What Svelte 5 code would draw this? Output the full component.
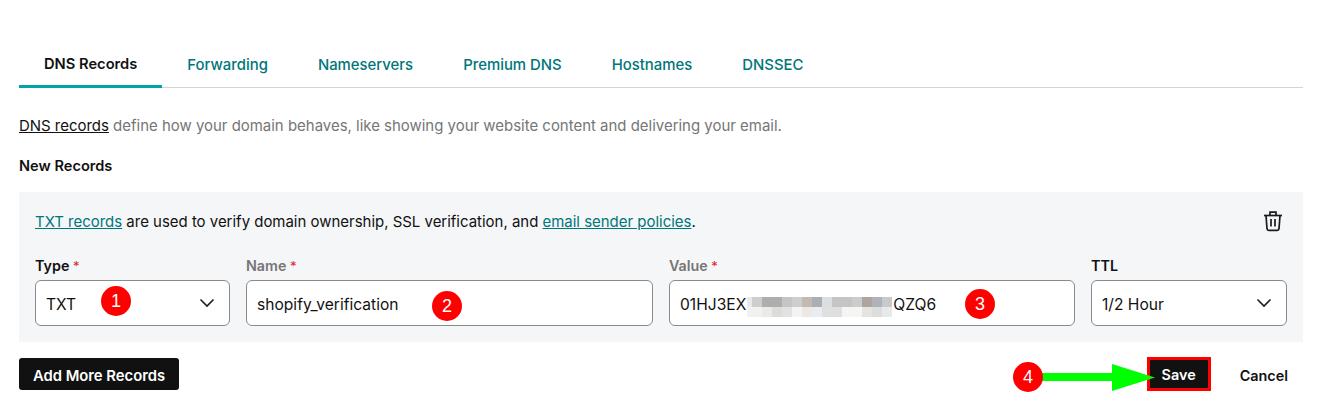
<script>
	const tabs = ['DNS Records', 'Forwarding', 'Nameservers', 'Premium DNS', 'Hostnames', 'DNSSEC'];
	const blurTop = ['#e9e9e8', '#cfcecd', '#aeaead', '#aeaead', '#c4c5c6', '#cfcdcd', '#c5bab3', '#adaeb4', '#dcdfe0', '#c4c5c4', '#c4c5c4', '#cbcccb', '#aea59d', '#b1b2b9', '#c9c9ca'];
	const blurBottom = ['#f1f1f0', '#f1f1f0', '#eaeae8', '#dcdcda', '#e2e2e1', '#f3f3f2', '#ede8e4', '#e9edf1', '#dedfe0', '#dedfdf', '#f5f5f4', '#f5f5f4', '#e6e4e1', '#dcdddd', '#e8e9eb'];
</script>

<div class="page">
	<nav class="tabs">
		{#each tabs as tab, i}
			<button class="tab" class:active={i === 0}>{tab}</button>
		{/each}
	</nav>

	<p class="intro"><a href="#dns" class="dark">DNS records</a> define how your domain behaves, like showing your website content and delivering your email.</p>
	<h2>New Records</h2>

	<section class="panel">
		<div class="panel-head">
			<p><a href="#txt" class="teal">TXT records</a> are used to verify domain ownership, SSL verification, and <a href="#policy" class="teal">email sender policies</a>.</p>
			<svg class="trash" width="22" height="22" viewBox="0 0 22 22" fill="none" stroke="#1b1b1b" stroke-width="1.7">
				<path d="M2 5.500h18" />
				<path d="M8 5V2.200h6V5" />
				<path d="M4 5.500l1 13.200c.1 1 .8 1.600 1.700 1.600h8.600c.9 0 1.600-.6 1.700-1.600l1-13.200" />
				<path d="M9 9v7.500M13 9v7.500" />
			</svg>
		</div>
		<div class="fields">
			<div class="field">
				<span class="label">Type <i>*</i></span>
				<div class="control"><span>TXT</span>
					<svg class="chev" width="16" height="10" viewBox="0 0 16 10" fill="none" stroke="#1b1b1b" stroke-width="1.6"><path d="M1.500 1.500L8 8l6.500-6.500" /></svg>
				</div>
			</div>
			<div class="field">
				<span class="label muted">Name <i>*</i></span>
				<div class="control"><span>shopify_verification</span></div>
			</div>
			<div class="field">
				<span class="label muted">Value <i>*</i></span>
				<div class="control start"><span>01HJ3EX</span><span class="mosaic">
					{#each blurTop as c}<b style="background:{c}"></b>{/each}
					{#each blurBottom as c}<b style="background:{c}"></b>{/each}
				</span><span>QZQ6</span></div>
			</div>
			<div class="field">
				<span class="label">TTL</span>
				<div class="control"><span>1/2 Hour</span>
					<svg class="chev" width="16" height="10" viewBox="0 0 16 10" fill="none" stroke="#1b1b1b" stroke-width="1.6"><path d="M1.500 1.500L8 8l6.500-6.500" /></svg>
				</div>
			</div>
		</div>
	</section>

	<div class="actions">
		<button class="primary add">Add More Records</button>
		<div class="right">
			<button class="primary save">Save</button>
			<button class="plain">Cancel</button>
		</div>
	</div>

	<!-- annotations drawn on top of the screenshot -->
	<span class="dot" style="left:101px;top:286px">1</span>
	<span class="dot" style="left:432px;top:291px">2</span>
	<span class="dot" style="left:965px;top:289px">3</span>
	<span class="dot" style="left:1013px;top:362px">4</span>
	<svg class="arrow" width="115" height="30" viewBox="0 0 115 30">
		<path d="M0 11h72V2l43 13.500L72 29V19H0z" fill="#00ff00" />
	</svg>
</div>

<style>
	:global(body) {
		margin: 0;
		background: #fff;
	}
	.page {
		position: relative;
		width: 1325px;
		height: 412px;
		box-sizing: border-box;
		padding: 47px 22px 0 19px;
		font-family: Inter, 'Noto Sans', sans-serif;
		font-size: 14.960px;
		color: #111;
		overflow: hidden;
	}
	button {
		font-family: inherit;
		border: none;
		background: none;
		padding: 0;
	}
	.tabs {
		display: flex;
		height: 40px;
		border-bottom: 1px solid #d4d4d4;
	}
	.tab {
		height: 41px;
		padding: 0 25px 5px;
		font-size: 14.900px;
		font-weight: 500;
		color: #00767a;
	}
	.tab.active {
		color: #111;
		font-size: 14.700px;
		font-weight: 600;
		border-bottom: 3px solid #00a4a6;
	}
	.intro {
		margin: 28px 0 0;
		line-height: 20px;
		color: #767676;
	}
	.dark {
		color: #111;
	}
	.teal {
		color: #00767a;
	}
	h2 {
		margin: 20px 0 0;
		font-size: 14.600px;
		line-height: 20px;
		font-weight: 600;
	}
	.panel {
		margin-top: 16px;
		height: 150px;
		box-sizing: border-box;
		padding: 18px 16px 0;
		background: #f5f6f8;
	}
	.panel-head {
		display: flex;
		justify-content: space-between;
		align-items: center;
		height: 22px;
		padding-right: 3px;
	}
	.panel-head p {
		margin: 0;
		padding-top: 2px;
	}
	.fields {
		display: grid;
		grid-template-columns: 195px 407px 406px 196px;
		gap: 16px;
		margin-top: 24px;
	}
	.label {
		display: block;
		height: 24px;
		line-height: 20px;
		font-size: 14.300px;
		font-weight: 600;
	}
	.label.muted {
		color: #767676;
	}
	.label i {
		color: #d9262b;
		font-size: 13px;
		font-style: normal;
		font-weight: 400;
	}
	.control {
		display: flex;
		align-items: center;
		justify-content: space-between;
		height: 46px;
		box-sizing: border-box;
		padding: 0 14px 0 10px;
		background: #fff;
		border: 1px solid #8a8a8a;
		border-radius: 6px;
		font-size: 15.600px;
	}
	.control span {
		padding-top: 2px;
	}
	.control.start {
		justify-content: flex-start;
	}
	.control .mosaic {
		display: grid;
		grid-template-columns: 5px repeat(14, 10px);
		grid-auto-rows: 10px;
		width: 145px;
		padding-top: 0;
		margin: 8px 1px 0 1px;
		flex-shrink: 0;
	}
	.actions {
		display: flex;
		justify-content: space-between;
		align-items: center;
		margin-top: 16px;
		height: 32px;
	}
	.primary {
		height: 32px;
		padding-top: 3px;
		background: #111;
		color: #fff;
		font-size: 14.400px;
		font-weight: 600;
		border-radius: 3px;
	}
	.add {
		width: 160px;
		font-size: 14.800px;
	}
	.right {
		display: flex;
		align-items: center;
		gap: 29px;
		padding-right: 15px;
	}
	.save {
		width: 64px;
		height: 34px;
		padding-top: 1px;
		border: 3px solid #f00;
		border-radius: 0;
	}
	.plain {
		padding-top: 2px;
		font-size: 14.400px;
		font-weight: 600;
		color: #111;
	}
	.dot {
		position: absolute;
		width: 30px;
		height: 30px;
		border-radius: 50%;
		background: #f00;
		color: #fff;
		font-family: 'Liberation Sans', sans-serif;
		font-size: 18px;
		line-height: 30px;
		text-align: center;
		z-index: 2;
	}
	.arrow {
		position: absolute;
		left: 1040px;
		top: 362px;
	}
</style>
